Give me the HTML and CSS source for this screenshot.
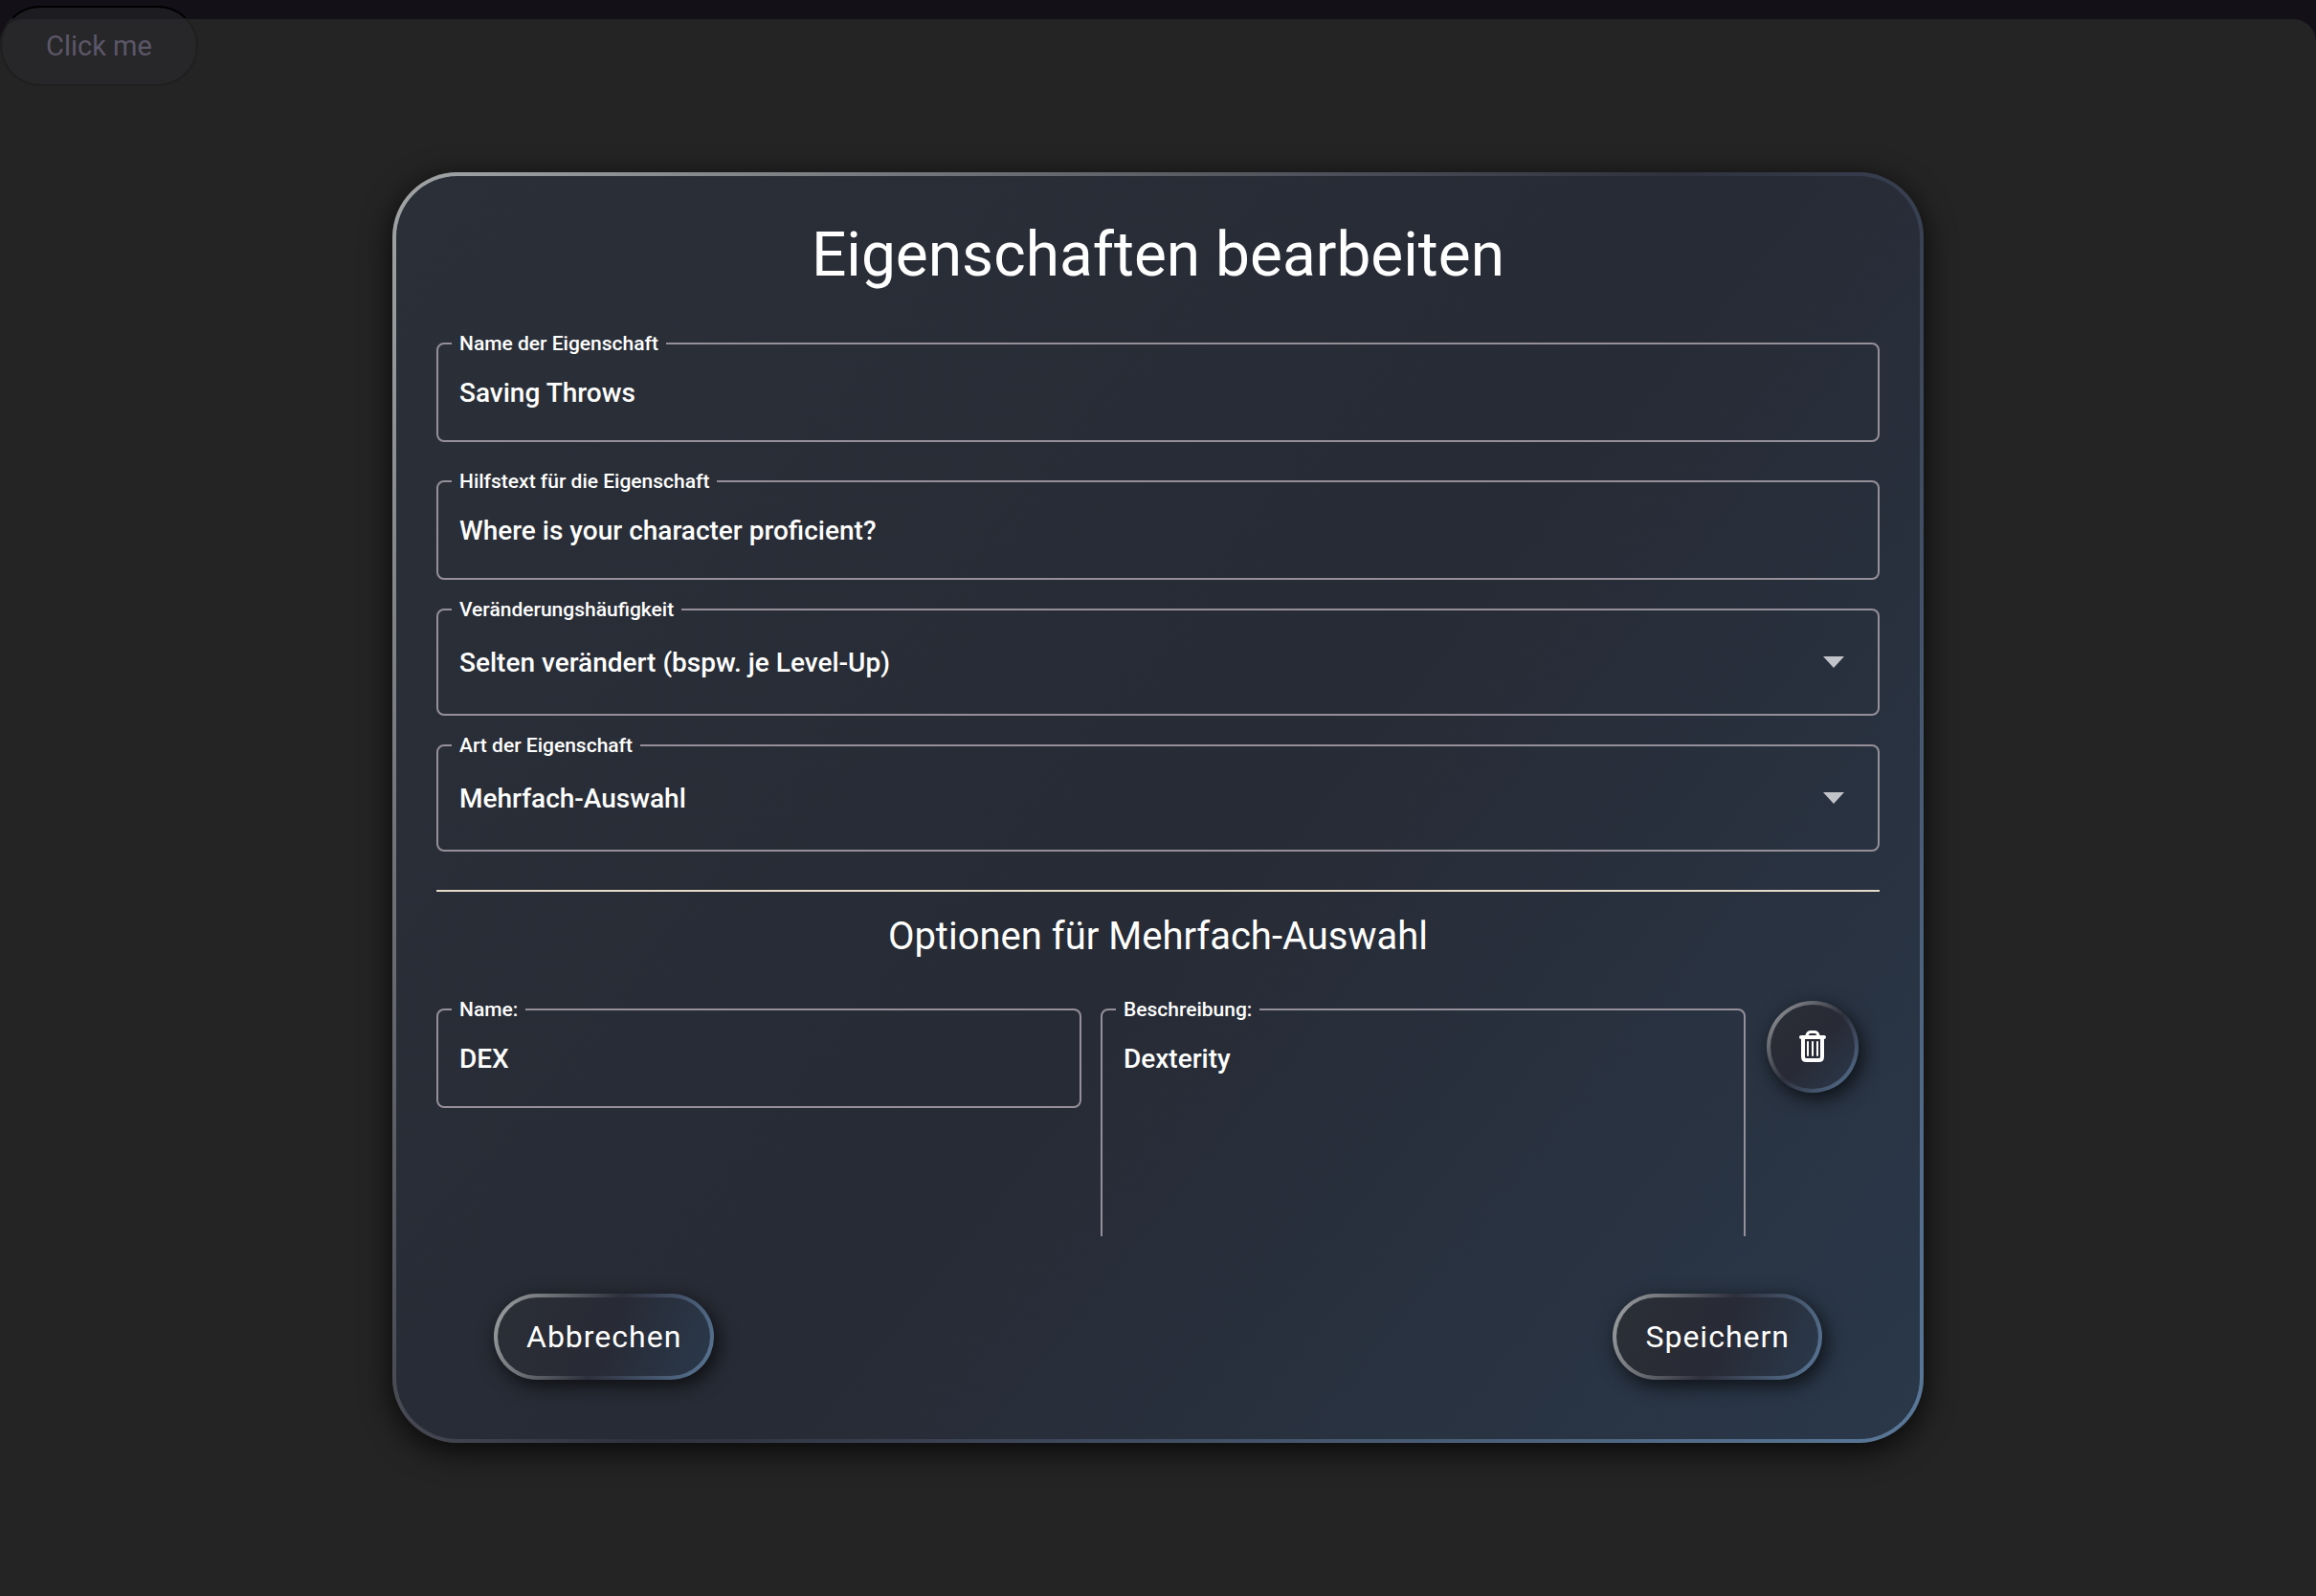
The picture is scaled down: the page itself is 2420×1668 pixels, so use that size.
FILE: index.html
```html
<!DOCTYPE html>
<html lang="de">
<head>
  <meta charset="utf-8">
  <meta name="viewport" content="width=device-width, initial-scale=1">
  <title>Eigenschaften bearbeiten</title>
  <link rel="stylesheet" href="styles.css">
</head>
<body>
  <button class="click-me" type="button">Click me</button>
  <main class="sheet">
    <form class="dialog">
      <h1 class="dialog-title">Eigenschaften bearbeiten</h1>

      <fieldset class="field">
        <legend><label for="prop-name">Name der Eigenschaft</label></legend>
        <input id="prop-name" class="control" type="text" value="Saving Throws">
      </fieldset>

      <fieldset class="field field-spaced">
        <legend><label for="prop-help">Hilfstext für die Eigenschaft</label></legend>
        <input id="prop-help" class="control" type="text" value="Where is your character proficient?">
      </fieldset>

      <fieldset class="field field-close">
        <legend><label for="prop-frequency">Veränderungshäufigkeit</label></legend>
        <div class="select">
          <select id="prop-frequency" class="control control-select">
            <option>Selten verändert (bspw. je Level-Up)</option>
          </select>
          <svg class="arrow" viewBox="0 0 22 12" aria-hidden="true"><path d="M0 0h22L11 12z"/></svg>
        </div>
      </fieldset>

      <fieldset class="field field-close">
        <legend><label for="prop-kind">Art der Eigenschaft</label></legend>
        <div class="select">
          <select id="prop-kind" class="control control-select">
            <option>Mehrfach-Auswahl</option>
          </select>
          <svg class="arrow" viewBox="0 0 22 12" aria-hidden="true"><path d="M0 0h22L11 12z"/></svg>
        </div>
      </fieldset>

      <hr class="divider">
      <h2 class="section-title">Optionen für Mehrfach-Auswahl</h2>

      <div class="options">
        <div class="option">
          <fieldset class="field">
            <legend><label for="option-name">Name:</label></legend>
            <input id="option-name" class="control" type="text" value="DEX">
          </fieldset>
          <fieldset class="field">
            <legend><label for="option-text">Beschreibung:</label></legend>
            <textarea id="option-text" class="control control-area">Dexterity</textarea>
          </fieldset>
          <button class="pill icon-button" type="button" aria-label="Option löschen">
            <svg class="trash" viewBox="0 0 28 34" fill="none" stroke="currentColor" stroke-linecap="round" stroke-linejoin="round" aria-hidden="true">
              <path stroke-width="4" d="M2 7h24M4 8v19.500q0 3.500 3.500 3.500h13q3.500 0 3.500-3.500V8"/>
              <path stroke-width="3" d="M8 5q1-3.500 4-3.500h4q3 0 4 3.500"/>
              <path stroke-width="2" d="M9 12v14M14 12v14M19 12v14"/>
            </svg>
          </button>
        </div>
      </div>

      <div class="actions">
        <button class="pill" type="button">Abbrechen</button>
        <button class="pill" type="submit">Speichern</button>
      </div>
    </form>
  </main>
</body>
</html>
```
FILE: styles.css
```css
* {
  box-sizing: border-box;
}

body {
  margin: 0;
  background: #131117;
  color: #fff;
  font-family: Roboto, "Liberation Sans", sans-serif;
  font-size: 28px;
}

button,
input,
select,
textarea {
  font: inherit;
  color: inherit;
}

.click-me {
  position: absolute;
  top: 6px;
  left: 0;
  height: 84px;
  padding: 0 46px;
  border: 2px solid #1f1f1f;
  border-top-color: #000;
  border-radius: 42px;
  background: rgba(46, 46, 50, 0.4);
  color: #5b5668;
  font-size: 29px;
}

.sheet {
  display: flex;
  align-items: center;
  justify-content: center;
  min-height: calc(100vh - 20px);
  margin-top: 20px;
  padding: 40px;
  border-radius: 24px 24px 0 0;
  background: #242424;
}

.dialog {
  display: flex;
  flex-direction: column;
  width: 100%;
  max-width: 1600px;
  padding: 43px 42px 62px;
  border: 4px solid transparent;
  border-radius: 68px;
  background:
    linear-gradient(129deg, #2b2f38, #272b35 54%, #2a384a) padding-box,
    linear-gradient(129deg, #a2a5a5, #2f313d 50%, #5a7899) border-box;
  box-shadow: 0 8px 32px rgba(0, 0, 0, 0.8);
}

.dialog-title {
  margin: 0 0 39px;
  font-size: 64px;
  font-weight: 400;
  line-height: 80px;
  text-align: center;
}

.field {
  min-width: 0;
  margin: 0;
  padding: 0 14px 12px;
  border: 2px solid #958f99;
  border-radius: 8px;
}

.field-spaced {
  margin-top: 28px;
}

.field-close {
  margin-top: 18px;
}

.field legend {
  padding: 0 8px;
  font-size: 21px;
  font-weight: 500;
  line-height: 26px;
}

.field label {
  display: block;
}

.control {
  display: block;
  width: 100%;
  height: 76px;
  padding: 0 8px;
  border: 0;
  outline: 0;
  background: transparent;
  font-weight: 500;
  appearance: none;
}

.control-select {
  height: 84px;
}

.control-area {
  height: 300px;
  padding-top: 21px;
  line-height: 36px;
  resize: none;
}

.select {
  display: grid;
  align-items: center;
}

.select > * {
  grid-area: 1 / 1;
}

.arrow {
  justify-self: end;
  width: 22px;
  height: 12px;
  margin-right: 21px;
  fill: #c2c4ca;
  pointer-events: none;
}

.divider {
  width: 100%;
  height: 2px;
  margin: 40px 0 23px;
  border: 0;
  background: #e6dac8;
}

.section-title {
  margin: 0 0 19px;
  font-size: 40px;
  font-weight: 400;
  line-height: 48px;
  text-align: center;
}

.options {
  max-height: 270px;
  padding-top: 20px;
  overflow: hidden;
}

.option {
  display: grid;
  grid-template-columns: 1fr 1fr 120px;
  align-items: start;
  gap: 20px;
}

.pill {
  height: 90px;
  padding: 0 30px;
  border: 4px solid transparent;
  border-radius: 48px;
  background:
    linear-gradient(112deg, #2b2f36, #282a35 50%, #2a394b) padding-box,
    linear-gradient(112deg, #a2a5a5, #2e303c 50%, #5a7899) border-box;
  box-shadow: 4px 6px 20px rgba(0, 0, 0, 0.7);
  font-size: 32px;
  letter-spacing: 1px;
}

.icon-button {
  display: grid;
  place-items: center;
  width: 96px;
  height: 96px;
  margin: 4px 0 0 2px;
  padding: 0;
  background:
    linear-gradient(133deg, #2b2f36, #282a35 50%, #2a394b) padding-box,
    linear-gradient(133deg, #a2a5a5, #2e303c 50%, #5a7899) border-box;
}

.trash {
  width: 28px;
  height: 34px;
}

.actions {
  display: flex;
  justify-content: space-between;
  margin-top: 60px;
  padding: 0 60px;
}
```
